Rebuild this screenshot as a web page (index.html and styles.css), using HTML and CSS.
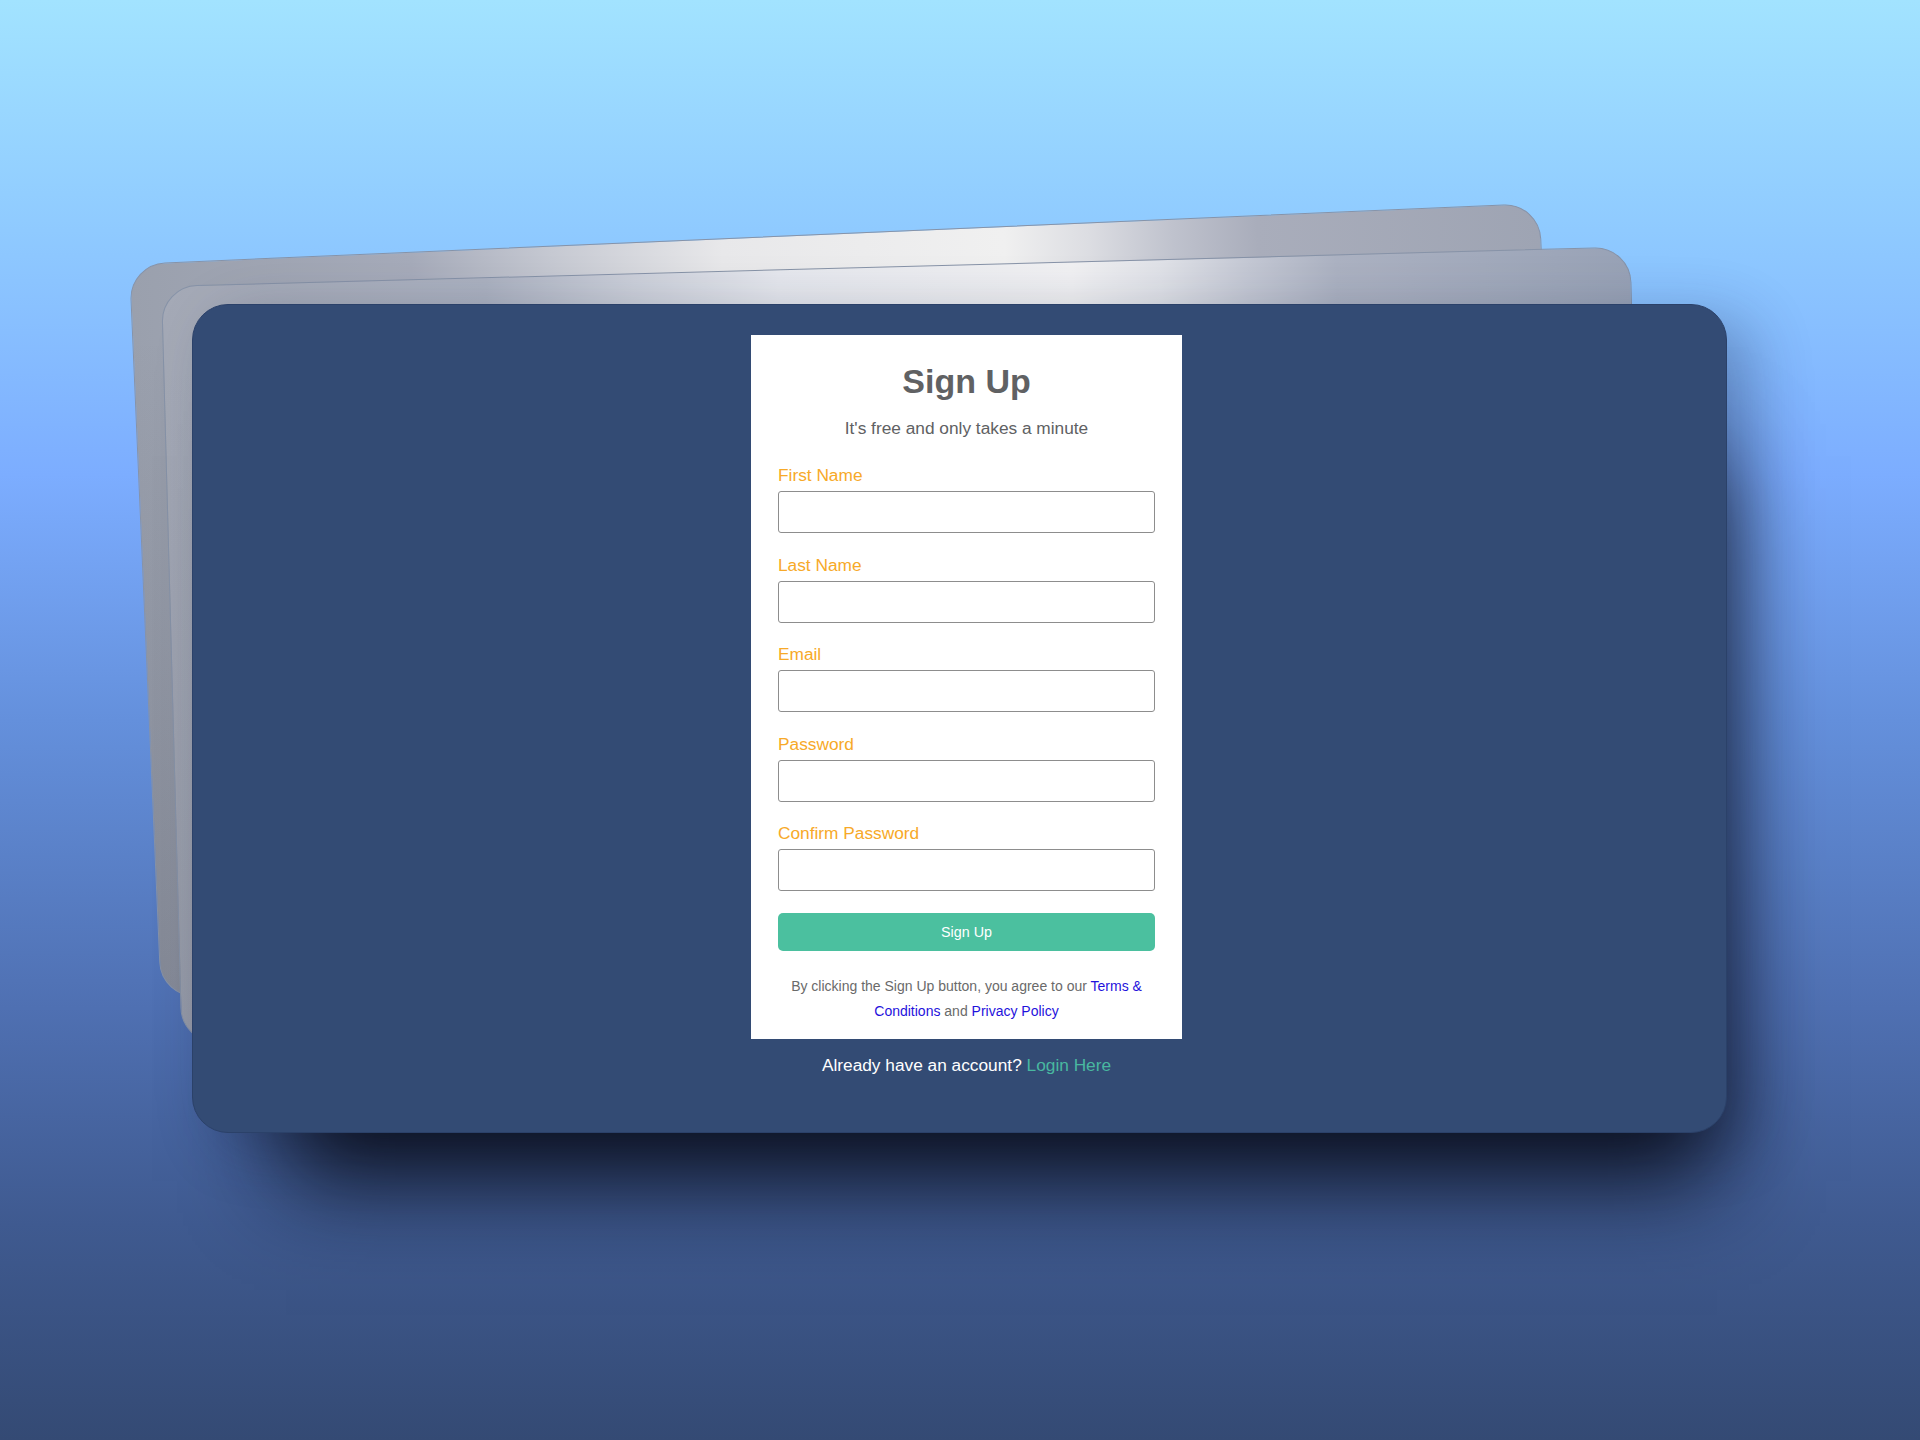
FILE: index.html
```html
<!DOCTYPE html>
<html lang="en">
<head>
  <meta charset="UTF-8" />
  <meta name="viewport" content="width=device-width, initial-scale=1.0"/>
  <title>Sign Up</title>
  <link rel="stylesheet" href="styles.css">
</head>
<body>
  <!-- Tilted sheets behind the main window -->
  <div class="sheet sheet-back"></div>
  <div class="sheet sheet-middle"></div>

  <div class="window">
    <form class="signup-card">
      <h1>Sign Up</h1>
      <p class="tagline">It's free and only takes a minute</p>

      <label class="field">
        <span>First Name</span>
        <input type="text">
      </label>
      <label class="field">
        <span>Last Name</span>
        <input type="text">
      </label>
      <label class="field">
        <span>Email</span>
        <input type="email">
      </label>
      <label class="field">
        <span>Password</span>
        <input type="password">
      </label>
      <label class="field">
        <span>Confirm Password</span>
        <input type="password">
      </label>

      <button type="button" class="submit">Sign Up</button>

      <p class="terms">By clicking the Sign Up button, you agree to our <a href="#">Terms &amp; Conditions</a> and <a href="#">Privacy Policy</a></p>
    </form>
    <p class="login-line">Already have an account? <a href="#">Login Here</a></p>
  </div>
</body>
</html>
```

FILE: styles.css
```css
* {
  box-sizing: border-box;
}

body {
  margin: 0;
  height: 1440px;
  padding: 304px 0 0 192px;
  position: relative;
  overflow: hidden;
  font-family: "Liberation Sans", Arial, sans-serif;
  background: linear-gradient(to bottom, #a2e3ff 0%, #8fcaff 16%, #7cadff 33%, #6490dc 50%, #4f70b2 70%, #3f5a90 85%, #344a74 100%);
}

.sheet {
  position: absolute;
  border: 1px solid #8793a8;
  border-radius: 36px;
  transform-origin: top left;
}

.sheet-back {
  left: 129px;
  top: 264px;
  width: 1412px;
  height: 735px;
  transform: rotate(-2.48deg);
  background:
    linear-gradient(to bottom, transparent 10%, rgba(70, 72, 85, 0.25) 100%),
    linear-gradient(to right, #9aa0ad 0%, #a6abba 20%, #c6c9d2 30%, #e8e8ea 42%, #f0f0f0 62%, #dcdde2 68%, #bfc2cd 74%, #a9adbb 80%, #9ea4b3 100%);
}

.sheet-middle {
  left: 161px;
  top: 286px;
  width: 1470px;
  height: 758px;
  transform: rotate(-1.54deg);
  background:
    linear-gradient(to bottom, transparent 10%, rgba(70, 72, 85, 0.15) 100%),
    linear-gradient(to right, #a4a9b6 0%, #acb2c1 22%, #ccd0da 32%, #e6e8ee 42%, #f1f1f3 62%, #e0e2e8 68%, #c4c8d4 74%, #acb2c2 80%, #98a2b6 100%);
}

.window {
  position: relative;
  width: 1535px;
  height: 829px;
  padding: 30px 0 0 14px;
  display: flex;
  flex-direction: column;
  align-items: center;
  background-color: #334b74;
  border: 1px solid #2b4169;
  border-radius: 36px;
  box-shadow: 42px 100px 90px -52px rgba(8, 12, 24, 0.95), 25px 15px 60px rgba(20, 30, 60, 0.3);
}

.signup-card {
  width: 431px;
  height: 704px;
  padding: 0 27px;
  background-color: #ffffff;
}

h1 {
  margin: 24px 0 0;
  font-size: 34px;
  line-height: 44px;
  text-align: center;
  color: #606163;
}

.tagline {
  margin: 13px 0 0;
  font-size: 17.3px;
  line-height: 24px;
  text-align: center;
  color: #606163;
}

.field {
  display: block;
  margin-top: 21.5px;
}

.tagline + .field {
  margin-top: 25px;
}

.field span {
  display: block;
  margin-bottom: 6px;
  font-size: 17.3px;
  line-height: 20px;
  color: #f7a928;
}

.field input {
  display: block;
  width: 100%;
  height: 42px;
  padding: 0 10px;
  background-color: #ffffff;
  border: 1.5px solid #8d8d8d;
  border-radius: 3px;
}

.submit {
  display: block;
  width: 100%;
  height: 38px;
  margin-top: 22px;
  font-family: inherit;
  font-size: 14.3px;
  color: #ffffff;
  background-color: #4bc09f;
  border: none;
  border-radius: 5px;
}

.terms {
  margin: 23px 0 0;
  font-size: 14px;
  line-height: 25px;
  text-align: center;
  color: #6a6a6a;
}

.terms a {
  color: #1f12dc;
  text-decoration: none;
}

.login-line {
  margin: 14px 0 0;
  font-size: 17.3px;
  line-height: 24px;
  color: #ffffff;
}

.login-line a {
  color: #49b8a0;
  text-decoration: none;
}
```
